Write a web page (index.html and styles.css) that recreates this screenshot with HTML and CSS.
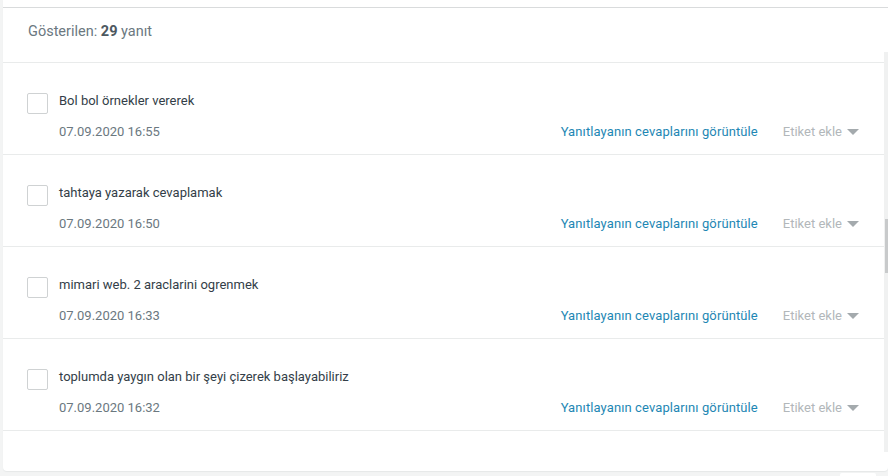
FILE: index.html
```html
<!DOCTYPE html>
<html lang="tr">
<head>
  <meta charset="UTF-8">
  <meta name="viewport" content="width=device-width, initial-scale=1.0">
  <title>Yanıtlar</title>
  <link rel="stylesheet" href="styles.css">
</head>
<body>
  <div class="panel">
    <div class="panel-top"></div>
    <div class="summary">Gösterilen: <b>29</b> yanıt</div>

    <div class="list-wrap">
      <div class="list">
        <div class="response">
          <span class="check"></span>
          <div class="response-body">
            <div class="answer">Bol bol örnekler vererek</div>
            <div class="meta">
              <span class="date">07.09.2020 16:55</span>
              <a class="view-link" href="#">Yanıtlayanın cevaplarını görüntüle</a>
              <span class="tag">Etiket ekle <span class="caret"></span></span>
            </div>
          </div>
        </div>
        <div class="response">
          <span class="check"></span>
          <div class="response-body">
            <div class="answer">tahtaya yazarak cevaplamak</div>
            <div class="meta">
              <span class="date">07.09.2020 16:50</span>
              <a class="view-link" href="#">Yanıtlayanın cevaplarını görüntüle</a>
              <span class="tag">Etiket ekle <span class="caret"></span></span>
            </div>
          </div>
        </div>
        <div class="response">
          <span class="check"></span>
          <div class="response-body">
            <div class="answer">mimari web. 2 araclarini ogrenmek</div>
            <div class="meta">
              <span class="date">07.09.2020 16:33</span>
              <a class="view-link" href="#">Yanıtlayanın cevaplarını görüntüle</a>
              <span class="tag">Etiket ekle <span class="caret"></span></span>
            </div>
          </div>
        </div>
        <div class="response">
          <span class="check"></span>
          <div class="response-body">
            <div class="answer">toplumda yaygın olan bir şeyi çizerek başlayabiliriz</div>
            <div class="meta">
              <span class="date">07.09.2020 16:32</span>
              <a class="view-link" href="#">Yanıtlayanın cevaplarını görüntüle</a>
              <span class="tag">Etiket ekle <span class="caret"></span></span>
            </div>
          </div>
        </div>
        <div class="response"></div>
      </div>
      <div class="scrollbar"><div class="thumb"></div></div>
    </div>
  </div>

  <div class="footer">
    <span class="footer-btn"></span>
  </div>
</body>
</html>
```

FILE: styles.css
```css
body {
  font-family: Roboto, "Liberation Sans", Arial, sans-serif;
  background-color: #f3f4f4;
  margin: 0;
  padding: 0;
  overflow: hidden;
  height: 476px;
}

.panel {
  margin-left: 3px;
  background-color: #fff;
  border-radius: 0 0 4px 4px;
  box-shadow: 0 1px 1px #e6e8e8;
  padding-bottom: 19px;
}

.panel-top {
  height: 7px;
}

.summary {
  border-top: 1px solid #d9dbdc;
  height: 44px;
  padding-left: 25px;
  line-height: 47px;
  font-size: 14.5px;
  color: #6b787f;
}

.summary b {
  color: #4d5860;
}

.list-wrap {
  display: flex;
  height: 400px;
}

.list {
  flex: 1;
  overflow: hidden;
  padding-top: 10px;
}

.scrollbar {
  width: 4px;
  background-color: #f0f1f1;
}

.thumb {
  margin-top: 167px;
  margin-left: 1px;
  width: 3px;
  height: 54px;
  background-color: #c8cacb;
}

.response {
  display: flex;
  border-top: 1px solid #e9ebeb;
  height: 91px;
  padding-left: 24px;
}

.check {
  width: 19px;
  height: 19px;
  border: 1px solid #cfd2d3;
  border-radius: 2px;
  margin-top: 30px;
  flex-shrink: 0;
}

.response-body {
  flex: 1;
  padding-left: 11px;
  padding-top: 30px;
}

.answer {
  font-size: 13px;
  color: #333e48;
  line-height: 16px;
}

.meta {
  display: flex;
  align-items: center;
  margin-top: 14.5px;
  font-size: 13px;
  line-height: 16px;
}

.date {
  color: #6b787f;
  flex: 1;
}

.view-link {
  color: #1e87b4;
  text-decoration: none;
  letter-spacing: 0.1px;
}

.tag {
  color: #b2b7ba;
  margin-left: 25px;
  margin-right: 25px;
  display: flex;
  align-items: center;
}

.caret {
  display: inline-block;
  margin-left: 5px;
  width: 0;
  height: 0;
  border-left: 6px solid transparent;
  border-right: 6px solid transparent;
  border-top: 6px solid #a4aaad;
}

.footer {
  display: flex;
  justify-content: flex-end;
  padding-top: 2px;
  padding-right: 12px;
}

.footer-btn {
  width: 36px;
  height: 10px;
  background-color: #fff;
  border-radius: 2px;
}
```
